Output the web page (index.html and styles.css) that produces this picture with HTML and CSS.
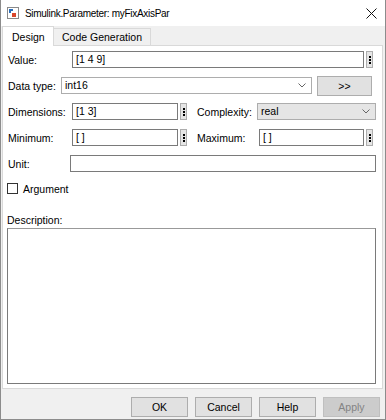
FILE: index.html
```html
<!DOCTYPE html>
<html lang="en">
<head>
    <meta charset="UTF-8">
    <title>Simulink.Parameter: myFixAxisPar</title>
    <link rel="stylesheet" href="styles.css">
</head>
<body>
    <div class="window">
        <div class="titlebar">
            <svg class="app-icon" width="12" height="12" viewBox="0 0 12 12"><rect x="0.5" y="0.5" width="11" height="11" fill="#fff" stroke="#8a8a8a"/><path d="M2 2h4v2H4v2H2z" fill="#2a6ebb"/><rect x="5" y="6" width="4" height="4" fill="#d9462c"/></svg>
            <span class="title">Simulink.Parameter: myFixAxisPar</span>
            <svg class="close" width="11" height="11" viewBox="0 0 11 11"><path d="M0.5 0.5l10 10M10.5 0.5l-10 10" stroke="#111" stroke-width="1"/></svg>
        </div>

        <div class="tabs">
            <div class="tab active">Design</div>
            <div class="tab">Code Generation</div>
        </div>

        <div class="panel">
            <div class="row">
                <label class="lbl">Value:</label>
                <div class="field grow">[1 4 9]</div>
                <div class="more"><i></i><i></i><i></i></div>
            </div>

            <div class="row">
                <label class="lbl lbl-dtype">Data type:</label>
                <div class="field select grow">int16<svg class="chev" width="8" height="5" viewBox="0 0 8 5"><path d="M0.5 0.5l3.5 3.5 3.5-3.5" fill="none" stroke="#666"/></svg></div>
                <div class="btn btn-small">&gt;&gt;</div>
            </div>

            <div class="row">
                <label class="lbl">Dimensions:</label>
                <div class="field half">[1 3]</div>
                <div class="more"><i></i><i></i><i></i></div>
                <label class="lbl lbl-right">Complexity:</label>
                <div class="field select gray grow">real<svg class="chev" width="8" height="5" viewBox="0 0 8 5"><path d="M0.5 0.5l3.5 3.5 3.5-3.5" fill="none" stroke="#666"/></svg></div>
            </div>

            <div class="row">
                <label class="lbl">Minimum:</label>
                <div class="field half">[ ]</div>
                <div class="more"><i></i><i></i><i></i></div>
                <label class="lbl lbl-right lbl-max">Maximum:</label>
                <div class="field grow">[ ]</div>
                <div class="more"><i></i><i></i><i></i></div>
            </div>

            <div class="row">
                <label class="lbl lbl-unit">Unit:</label>
                <div class="field grow"></div>
            </div>

            <div class="check-row">
                <span class="checkbox"></span>
                <span>Argument</span>
            </div>

            <div class="desc-label">Description:</div>
            <div class="desc"></div>
        </div>

        <div class="footer">
            <div class="btn">OK</div>
            <div class="btn">Cancel</div>
            <div class="btn">Help</div>
            <div class="btn disabled">Apply</div>
        </div>
    </div>
</body>
</html>
```

FILE: styles.css
```css
body{
    margin: 0;
    padding: 0;
    font-family: 'Liberation Sans', Arial, sans-serif;
    font-size: 10.5px;
    color: #000;
}

.window{
    width: 386px;
    height: 420px;
    box-sizing: border-box;
    border: 1px solid #8c8c8c;
    border-top: none;
    background-color: #f0f0f0;
    display: flex;
    flex-direction: column;
}

.titlebar{
    height: 26px;
    background-color: #fff;
    display: flex;
    align-items: center;
    padding: 0 7px 0 6px;
}

.app-icon{
    margin-right: 6px;
}

.title{
    flex-grow: 1;
    font-size: 10px;
    letter-spacing: -0.3px;
}

.close{
    margin-right: 1px;
}

.tabs{
    height: 19px;
    display: flex;
    align-items: flex-end;
    padding-left: 1px;
}

.tab{
    height: 16px;
    padding: 0 8px;
    border: 1px solid #d9d9d9;
    border-bottom: none;
    line-height: 16px;
    margin-left: -1px;
}

.tab:first-child{
    margin-left: 0;
}

.tab.active{
    height: 19px;
    line-height: 20px;
    width: 32px;
    padding: 0 9px;
    background-color: #fff;
    position: relative;
    z-index: 1;
    margin-bottom: -1px;
}

.panel{
    flex-grow: 1;
    margin: 0 2px 0 1px;
    border: 1px solid #d9d9d9;
    background-color: #fff;
    padding: 5px 6px 4px 5px;
    display: flex;
    flex-direction: column;
}

.row{
    display: flex;
    align-items: center;
    height: 17px;
    margin-bottom: 9px;
}

.lbl{
    width: 64px;
    flex-shrink: 0;
}

.lbl-dtype{
    width: 53px;
}

.lbl-unit{
    width: 62px;
}

.lbl-right{
    width: 60px;
    margin-left: 7px;
}

.lbl-max{
    width: 62px;
}

.field{
    height: 17px;
    box-sizing: border-box;
    border: 1px solid #7a7a7a;
    background-color: #fff;
    padding: 0 3px;
    line-height: 15px;
    display: flex;
    align-items: center;
}

.grow{
    flex-grow: 1;
}

.half{
    width: 106px;
}

.select{
    border-color: #adadad;
    justify-content: space-between;
}

.select.gray{
    background-color: #e5e5e5;
}

.chev{
    margin-right: 2px;
}

.more{
    width: 7px;
    height: 17px;
    box-sizing: border-box;
    margin: 0 3px 0 2px;
    border: 1px solid #adadad;
    background-color: #e5e5e5;
    display: flex;
    flex-direction: column;
    align-items: center;
    justify-content: center;
    gap: 1px;
}

.more i{
    width: 2px;
    height: 2px;
    background-color: #000;
}

.btn{
    width: 57px;
    height: 20px;
    box-sizing: border-box;
    border: 1px solid #adadad;
    background-color: #e1e1e1;
    text-align: center;
    line-height: 18px;
}

.btn-small{
    width: 55px;
    margin: 0 4px 0 5px;
}

.btn.disabled{
    background-color: #cccccc;
    border-color: #bfbfbf;
    color: #838383;
}

.check-row{
    height: 15px;
    display: flex;
    align-items: center;
    gap: 5px;
    margin-left: -1px;
}

.checkbox{
    width: 11px;
    height: 11px;
    box-sizing: border-box;
    border: 1px solid #333;
    background-color: #fff;
}

.desc-label{
    margin-top: 18px;
    margin-left: -1px;
}

.desc{
    flex-grow: 1;
    margin-top: 2px;
    margin-left: -1px;
    border: 1px solid #7a7a7a;
    border-top-color: #999;
}

.footer{
    height: 30px;
    display: flex;
    justify-content: flex-end;
    align-items: flex-start;
    gap: 7px;
    padding: 8px 5px 0 0;
    box-sizing: border-box;
}
```
